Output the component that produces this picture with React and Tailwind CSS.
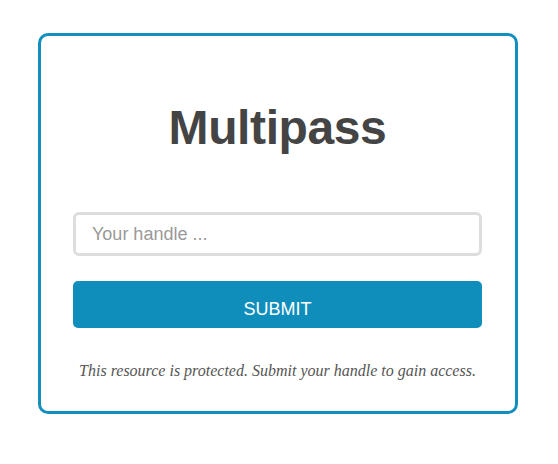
import React, { useState } from "react";

const App = () => {
  const [handle, setHandle] = useState("");

  return (
    <div className="min-h-screen bg-white pt-[33px] font-['Liberation_Sans',Arial,sans-serif]">
      {/* CARD */}
      <div className="ml-[38px] w-[480px] h-[381px] border-[3px] border-[#1190be] rounded-[10px] pl-[32px] pr-[33px] flex flex-col">
        <h1 className="mt-[64px] text-center text-[48px] leading-[56px] font-bold text-[#444444] tracking-[-0.4px]">
          Multipass
        </h1>

        <form
          className="mt-[56px] flex flex-col"
          onSubmit={(e) => e.preventDefault()}
        >
          <input
            type="text"
            value={handle}
            onChange={(e) => setHandle(e.target.value)}
            placeholder="Your handle ..."
            className="h-[44px] w-full border-[3px] border-[#dddddd] rounded-[6px] px-[16px] text-[18px] text-[#444444] placeholder:text-[#999999] outline-none"
          />
          <button
            type="submit"
            className="mt-[25px] h-[47px] w-full bg-[#0f8ebc] rounded-[5px] text-white text-[18px] pt-[10px]"
          >
            SUBMIT
          </button>
        </form>

        <p className="mt-[31px] text-center italic text-[16px] text-[#555555] font-['Liberation_Serif','Times_New_Roman',serif]">
          This resource is protected. Submit your handle to gain access.
        </p>
      </div>
    </div>
  );
};

export default App;
